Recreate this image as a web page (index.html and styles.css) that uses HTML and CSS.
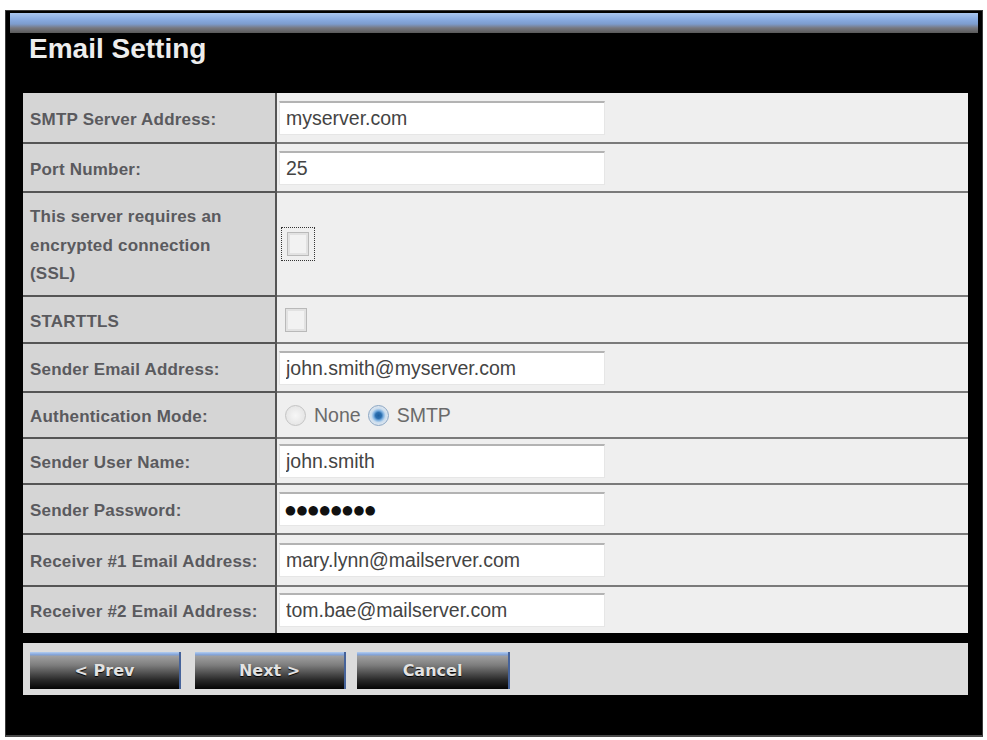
FILE: index.html
```html
<!DOCTYPE html>
<html>
<head>
<meta charset="utf-8">
<title>Email Setting</title>
<link rel="stylesheet" href="styles.css">
</head>
<body>
<div class="panel">
  <div class="strip"></div>
  <h1 class="title">Email Setting</h1>
  <div class="form">
    <div class="lbl">SMTP Server Address:</div>
    <div class="val"><input class="field" type="text" value="myserver.com"></div>

    <div class="lbl">Port Number:</div>
    <div class="val"><input class="field" type="text" value="25"></div>

    <div class="lbl multi">This server requires an<br>encrypted connection<br>(SSL)</div>
    <div class="val"><span class="focus"><input class="check" type="checkbox"></span></div>

    <div class="lbl">STARTTLS</div>
    <div class="val"><input class="check plain" type="checkbox"></div>

    <div class="lbl">Sender Email Address:</div>
    <div class="val"><input class="field" type="text" value="john.smith@myserver.com"></div>

    <div class="lbl">Authentication Mode:</div>
    <div class="val radios">
      <label class="opt"><input class="radio" type="radio" name="auth"><span>None</span></label>
      <label class="opt"><input class="radio" type="radio" name="auth" checked><span>SMTP</span></label>
    </div>

    <div class="lbl">Sender User Name:</div>
    <div class="val"><input class="field" type="text" value="john.smith"></div>

    <div class="lbl">Sender Password:</div>
    <div class="val"><input class="field pass" type="text" value="●●●●●●●●"></div>

    <div class="lbl">Receiver #1 Email Address:</div>
    <div class="val"><input class="field" type="text" value="mary.lynn@mailserver.com"></div>

    <div class="lbl">Receiver #2 Email Address:</div>
    <div class="val"><input class="field" type="text" value="tom.bae@mailserver.com"></div>
  </div>
  <div class="bar">
    <button class="btn">&lt; Prev</button>
    <button class="btn">Next &gt;</button>
    <button class="btn wide">Cancel</button>
  </div>
</div>
</body>
</html>
```

FILE: styles.css
```css
html, body {
  margin: 0;
  padding: 0;
  background: #ffffff;
}

.panel {
  margin: 10px 0 0 5px;
  width: 978px;
  height: 727px;
  box-sizing: border-box;
  border: 1px solid #3a3a3a;
  border-bottom: 2px solid #4a4a4a;
  background: #000000;
  padding: 2px 4px 0 4px;
}

.strip {
  height: 20px;
  background: linear-gradient(#a9c6ef 0%, #8aade3 30%, #7d9ccd 55%, #77787f 75%, #5a5a5a 100%);
}

.title {
  margin: 0 0 28px 19px;
  font-family: "Liberation Sans", Arial, sans-serif;
  font-weight: bold;
  font-size: 28px;
  line-height: 32px;
  color: #ededed;
}

.form {
  margin: 0 10px 0 13px;
  display: grid;
  grid-template-columns: 254px 1fr;
  grid-template-rows: 49px 49px 104px 47px 49px 46px 46px 50px 52px 48px;
  background: #efefef;
}

.lbl, .val {
  display: flex;
  align-items: center;
  box-sizing: border-box;
  border-top: 2px solid #555555;
}

.lbl:nth-child(1), .val:nth-child(2) {
  border-top: none;
}

.lbl {
  background: #d5d5d5;
  border-right: 2px solid #555555;
  padding: 4px 0 0 7px;
  font-family: "Liberation Sans", Arial, sans-serif;
  font-weight: bold;
  font-size: 17px;
  letter-spacing: 0.2px;
  color: #5a5a5e;
}

.lbl.multi {
  line-height: 28.5px;
}

.val {
  border-top-color: #7a7a7a;
  padding-left: 2px;
}

.field {
  width: 326px;
  height: 34px;
  box-sizing: border-box;
  margin: 0;
  padding: 0 0 0 6px;
  border: 1px solid #e6e6e6;
  border-top: 2px solid #b3b3b3;
  background: #ffffff;
  font-family: "Liberation Sans", Arial, sans-serif;
  font-size: 19.5px;
  color: #444444;
  outline: none;
}

.field.pass {
  font-family: "DejaVu Sans", sans-serif;
  font-size: 12.5px;
  letter-spacing: 0.5px;
  color: #111111;
  padding-left: 5px;
}

.focus {
  display: inline-flex;
  margin-left: 2px;
  padding: 4px 5px;
  border: 1px dotted #333333;
}

.check {
  -webkit-appearance: none;
  appearance: none;
  margin: 0;
  width: 22px;
  height: 24px;
  box-sizing: border-box;
  border: 1px solid #b9b9b9;
  background: #f2f2f2;
  box-shadow: inset 0 0 0 2px #e2e2e2;
}

.check.plain {
  margin-left: 6px;
}

.radios {
  padding-left: 8px;
  font-family: "Liberation Sans", Arial, sans-serif;
  font-size: 19.5px;
  color: #6a6a6a;
}

.opt {
  display: inline-flex;
  align-items: center;
}

.opt span {
  margin: 0 7px 0 8px;
}

.radio {
  -webkit-appearance: none;
  appearance: none;
  margin: 0;
  width: 21px;
  height: 21px;
  border-radius: 50%;
  box-sizing: border-box;
  border: 1px solid #c4c4c4;
  background: radial-gradient(circle at 50% 50%, #f7f7f7 0, #e6e6e6 70%, #d6d6d6 100%);
}

.radio:checked {
  border-color: #8aa6c4;
  background: radial-gradient(circle at 50% 50%, #1f5f9e 0, #2c6fb0 3px, #7fb1e0 5px, #c9dcee 7px, #e3e8ee 10px);
}

.bar {
  margin: 10px 10px 0 13px;
  height: 52px;
  box-sizing: border-box;
  background: #dcdcdc;
  padding: 9px 0 0 7px;
  display: flex;
  gap: 14px;
}

.btn {
  width: 151px;
  height: 37px;
  margin: 0;
  padding: 0;
  box-sizing: border-box;
  border: none;
  border-right: 2px solid #46639a;
  background: linear-gradient(#b3cdf0 0, #7d9fd6 3px, #a0a0a0 4px, #7e7e7e 35%, #2a2a2a 75%, #050505 100%);
  font-family: "DejaVu Sans", Verdana, sans-serif;
  font-weight: bold;
  font-size: 16px;
  color: #e2e2e2;
  text-shadow: 0 1px 1px #000000;
}

.btn.wide {
  width: 153px;
  margin-left: -3px;
}
```
